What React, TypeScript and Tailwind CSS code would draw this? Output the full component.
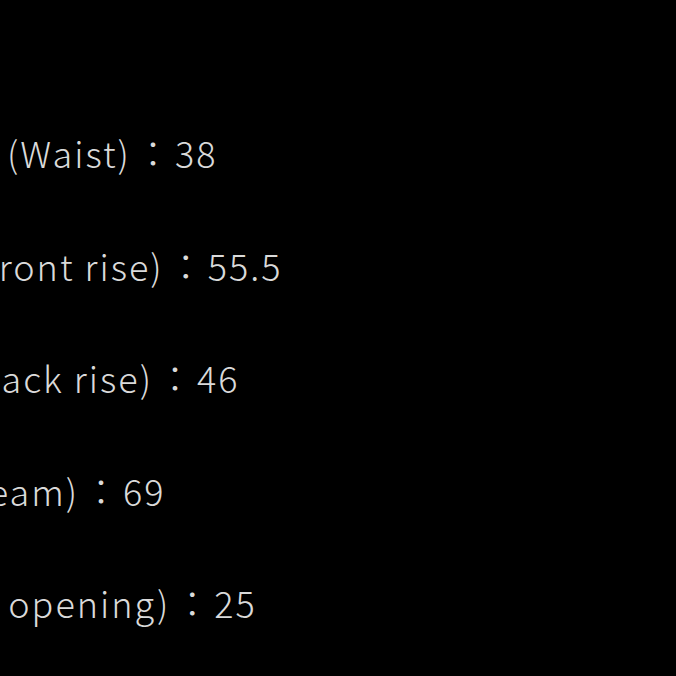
import React from 'react';

const rows = [
  { label: '(Waist)', value: '38', shift: 'ml-[7px]' },
  { label: '(Front rise)', value: '55.5', shift: 'ml-[-35px]' },
  { label: '(Back rise)', value: '46', shift: 'ml-[-37px]' },
  { label: '(Inseam)', value: '69', shift: 'ml-[-78px]' },
  { label: '(Leg opening)', value: '25', shift: 'ml-[-78px]' },
];

const App: React.FC = () => {
  return (
    <div className="w-[676px] h-[676px] bg-black overflow-hidden">
      <div
        className="flex flex-col pt-[132px] gap-[72.6px] text-[36px] leading-[40px] font-light tracking-[2px] text-[#dadada]"
        style={{ fontFamily: '"Noto Sans CJK JP", "Noto Sans", sans-serif' }}
      >
        {rows.map((r) => (
          <div key={r.label} className={`whitespace-pre ${r.shift}`}>
            <span>{r.label}</span>
            <span className="ml-[4px]">：</span>
            <span className="ml-[2px]">{r.value}</span>
          </div>
        ))}
      </div>
    </div>
  );
};

export default App;
